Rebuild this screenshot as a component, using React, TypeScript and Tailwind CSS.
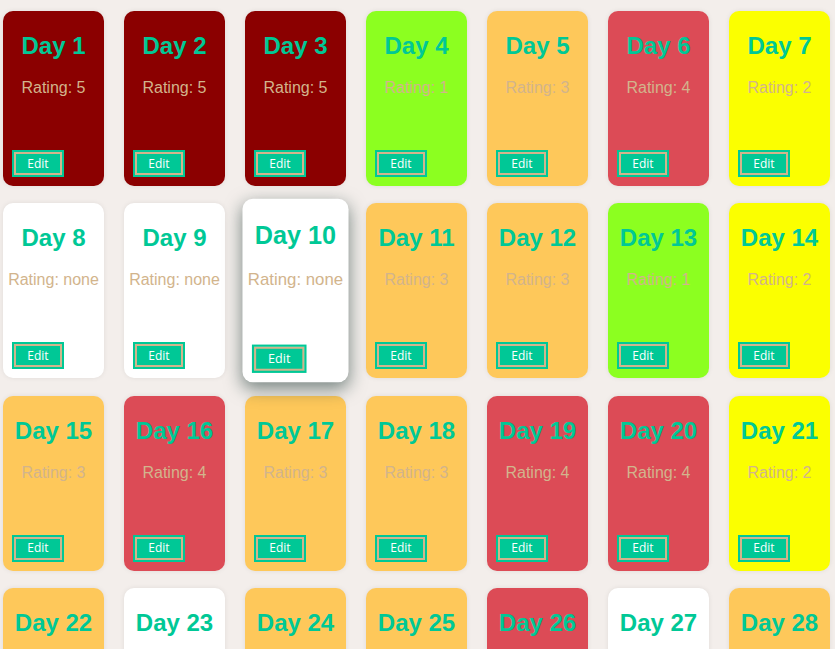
type Day = { n: number; rating: number | null };

const ratings: (number | null)[] = [
  5, 5, 5, 1, 3, 4, 2,
  null, null, null, 3, 3, 1, 2,
  3, 4, 3, 3, 4, 4, 2,
  3, null, 3, 3, 4, null, 3,
  2, 3, 4,
];

const days: Day[] = ratings.map((rating, i) => ({ n: i + 1, rating }));

function cardBg(rating: number | null) {
  switch (rating) {
    case 5:
      return "bg-[#8b0000]";
    case 4:
      return "bg-[#dc4b56]";
    case 3:
      return "bg-[#fec85a]";
    case 2:
      return "bg-[#fbff00]";
    case 1:
      return "bg-[#8cff20]";
    default:
      return "bg-white";
  }
}

function DayCard({ day, hovered }: { day: Day; hovered?: boolean }) {
  return (
    <div
      className={`flex flex-col items-center w-[101px] h-[175px] rounded-[10px] ${cardBg(day.rating)} ${
        hovered
          ? "scale-[1.05] shadow-[0_6px_16px_rgba(20,50,45,0.55)] relative z-10"
          : "shadow-[0_0_5px_rgba(0,0,0,0.08)]"
      }`}
    >
      <h2 className="mt-[21px] text-[24px] leading-[28px] font-bold text-[#00c896] font-['Liberation_Sans',Arial,sans-serif]">
        Day {day.n}
      </h2>
      <p className="mt-[19px] text-[16px] leading-[18px] text-[#d2b48c] font-['Liberation_Sans',Arial,sans-serif]">
        Rating: {day.rating ?? "none"}
      </p>
      <button className="mt-auto mb-[11px] self-start ml-[11px] w-[48px] h-[23px] border-2 border-[#d2b48c] outline-2 outline-[#00c896] bg-[#00c896] text-white text-[12px] leading-none font-['Open_Sans',sans-serif]">
        Edit
      </button>
    </div>
  );
}

export default function App() {
  return (
    <div className="min-h-screen bg-[#f3eeeb] pl-[3px] pt-[11px] pb-[20px]">
      <div className="grid grid-cols-[repeat(7,101px)] gap-x-[20px] gap-y-[17.4px]">
        {days.map((d) => (
          <DayCard key={d.n} day={d} hovered={d.n === 10} />
        ))}
      </div>
    </div>
  );
}
